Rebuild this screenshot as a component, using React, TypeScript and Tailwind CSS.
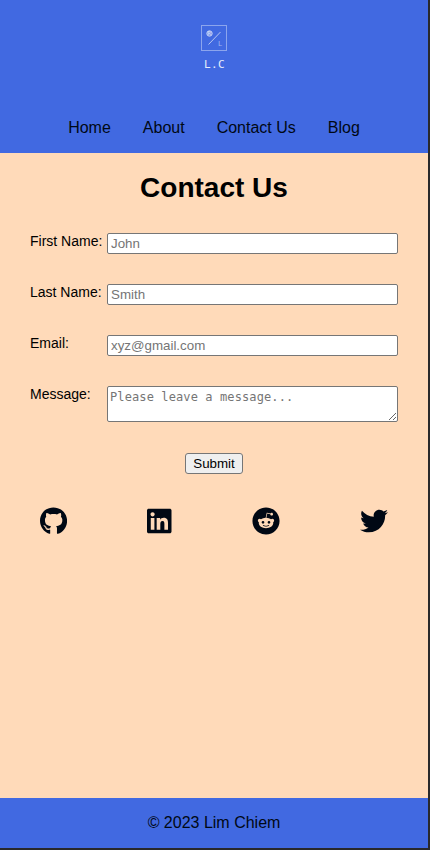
import React from "react";
import { FaGithub, FaLinkedin, FaReddit, FaTwitter } from "react-icons/fa";

const navItems = ["Home", "About", "Contact Us", "Blog"];

const fields = [
  { id: "first", label: "First Name:", placeholder: "John" },
  { id: "last", label: "Last Name:", placeholder: "Smith" },
  { id: "email", label: "Email:", placeholder: "xyz@gmail.com" },
];

const control =
  "block w-[291px] rounded-[2px] border border-[#767676] bg-white placeholder:text-[#757575] placeholder:opacity-100 outline-none";

function Logo() {
  return (
    <div className="flex h-12 flex-col items-center font-['DejaVu_Sans_Mono',monospace]">
      <svg width="28" height="28" viewBox="0 0 28 28" fill="none" className="block shrink-0">
        <rect x="1.5" y="1.5" width="25" height="25" stroke="#8ca5ed" />
        <path d="M8.5 20.5 20.5 8" stroke="#b5c5f3" />
        <circle cx="9.5" cy="9.5" r="2.7" fill="#7d97e9" stroke="#c4d1f6" />
        <text x="7.7" y="11.4" fontSize="5" fill="#dce4fa">R</text>
        <text x="18" y="22" fontSize="7" fill="#a5b8f1">L</text>
      </svg>
      <div className="mt-[6px] pl-[1px] text-[11px] leading-[14px] tracking-[0.4px] whitespace-nowrap text-[#e6ecfb]">L.C</div>
    </div>
  );
}

export default function App() {
  return (
    <div className="h-[850px] w-[430px] overflow-hidden bg-[#29292b] pr-[2px] pb-[2px] font-['Liberation_Sans',Arial,sans-serif] text-black">
      <div className="flex h-full flex-col bg-[#ffdab9]">
        <header className="flex h-[153px] shrink-0 flex-col items-center bg-[#4169e1] pt-6">
          <Logo />
          <nav className="mt-[44px] flex gap-8 text-base leading-6 text-[#000814]">
            {navItems.map((item) => (
              <a key={item} href="#">{item}</a>
            ))}
          </nav>
        </header>
        <main className="flex-1">
          <h1 className="mt-[17px] text-center text-[28px] leading-9 font-bold">Contact Us</h1>
          <form className="mt-[27px] flex flex-col px-[30px]">
            {fields.map((f) => (
              <div key={f.id} className="flex h-[51px]">
                <label htmlFor={f.id} className="w-[77px] shrink-0 text-[14px] leading-4">{f.label}</label>
                <input id={f.id} placeholder={f.placeholder} className={`${control} h-[21px] px-[3px] text-[13.333px]`} />
              </div>
            ))}
            <div className="flex h-[67px]">
              <label htmlFor="message" className="w-[77px] shrink-0 text-[14px] leading-4">Message:</label>
              <textarea
                id="message"
                placeholder="Please leave a message..."
                className={`${control} h-[36px] resize overflow-hidden px-[2px] py-[2px] font-['DejaVu_Sans_Mono',monospace] text-[12px] leading-4 tracking-[0.11px]`}
              />
            </div>
            <button type="button" className="h-[21px] w-[58px] self-center rounded-[3px] border border-[#767676] bg-[#efefef] text-[13.333px] leading-[19px]">
              Submit
            </button>
          </form>
          <div className="mt-[33.4px] flex items-center justify-between px-[40px] text-[#000814]">
            <FaGithub className="h-7 w-[27.1px]" />
            <FaLinkedin className="h-7 w-[24.5px]" />
            <FaReddit className="h-7 w-[28px]" />
            <FaTwitter className="h-7 w-[28px]" />
          </div>
        </main>
        <footer className="flex h-[50px] shrink-0 items-center justify-center bg-[#4169e1] text-base text-[#000814]">
          © 2023 Lim Chiem
        </footer>
      </div>
    </div>
  );
}
